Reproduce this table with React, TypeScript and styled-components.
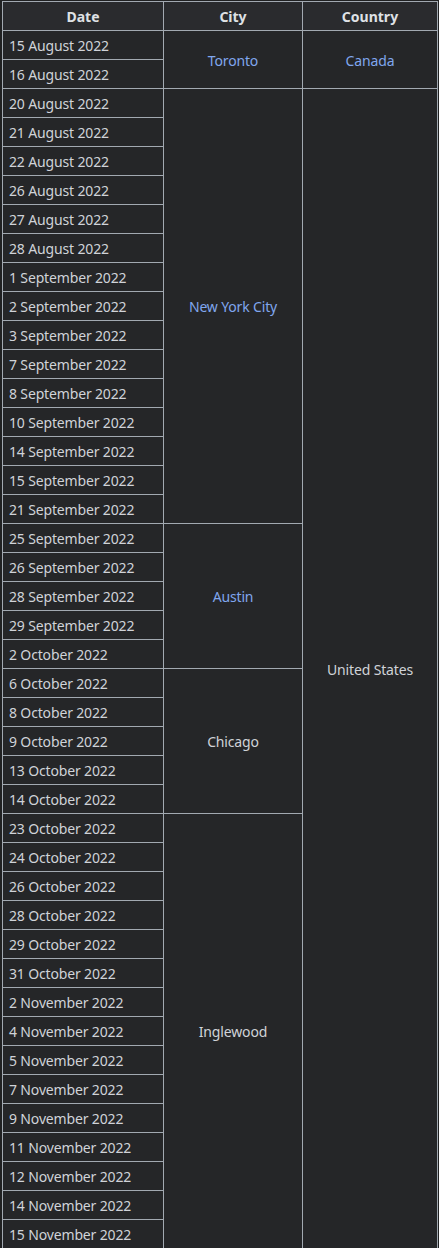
import styled, { createGlobalStyle } from "styled-components";

type Stop = { city: string; link: boolean; dates: string[] };

const stops: Stop[] = [
  { city: "Toronto", link: true, dates: ["15 August 2022", "16 August 2022"] },
  {
    city: "New York City",
    link: true,
    dates: [
      "20 August 2022",
      "21 August 2022",
      "22 August 2022",
      "26 August 2022",
      "27 August 2022",
      "28 August 2022",
      "1 September 2022",
      "2 September 2022",
      "3 September 2022",
      "7 September 2022",
      "8 September 2022",
      "10 September 2022",
      "14 September 2022",
      "15 September 2022",
      "21 September 2022",
    ],
  },
  {
    city: "Austin",
    link: true,
    dates: [
      "25 September 2022",
      "26 September 2022",
      "28 September 2022",
      "29 September 2022",
      "2 October 2022",
    ],
  },
  {
    city: "Chicago",
    link: false,
    dates: ["6 October 2022", "8 October 2022", "9 October 2022", "13 October 2022", "14 October 2022"],
  },
  {
    city: "Inglewood",
    link: false,
    dates: [
      "23 October 2022",
      "24 October 2022",
      "26 October 2022",
      "28 October 2022",
      "29 October 2022",
      "31 October 2022",
      "2 November 2022",
      "4 November 2022",
      "5 November 2022",
      "7 November 2022",
      "9 November 2022",
      "11 November 2022",
      "12 November 2022",
      "14 November 2022",
      "15 November 2022",
    ],
  },
];

// country cells span every stop that belongs to them
const countries = [
  { name: "Canada", link: true, from: 0, to: 0 },
  { name: "United States", link: false, from: 1, to: 4 },
];

export default function App() {
  return (
    <>
      <GlobalStyle />
      <Table>
        <colgroup>
          <col style={{ width: 161 }} />
          <col style={{ width: 139 }} />
          <col style={{ width: 135 }} />
        </colgroup>
        <thead>
          <tr>
            <Th>Date</Th>
            <Th>City</Th>
            <Th>Country</Th>
          </tr>
        </thead>
        <tbody>
          {stops.map((stop, si) =>
            stop.dates.map((date, di) => {
              const country = countries.find((c) => c.from === si);
              const countrySpan = country
                ? stops.slice(country.from, country.to + 1).reduce((n, s) => n + s.dates.length, 0)
                : 0;
              return (
                <tr key={date}>
                  <Td>{date}</Td>
                  {di === 0 && (
                    <Td rowSpan={stop.dates.length} $center>
                      {stop.link ? <Link href="#">{stop.city}</Link> : stop.city}
                    </Td>
                  )}
                  {di === 0 && country && (
                    <Td rowSpan={countrySpan} $center>
                      {country.link ? <Link href="#">{country.name}</Link> : country.name}
                    </Td>
                  )}
                </tr>
              );
            })
          )}
        </tbody>
      </Table>
    </>
  );
}

const GlobalStyle = createGlobalStyle`
  body {
    margin: 0;
    padding: 1px 0 0 2px;
    background: #202122;
    font-family: "Noto Sans", "Noto Sans CJK KR", sans-serif;
    font-size: 14px;
    color: #d0d3d8;
  }
`;

const Table = styled.table`
  border-collapse: collapse;
  table-layout: fixed;
  width: 435px;
  background: #252628;
  line-height: 22px;
`;

const Th = styled.th`
  border: 1px solid #a2a9b1;
  background: #2a2b2e;
  color: #dfe1e5;
  font-weight: bold;
  text-align: center;
  padding: 4px 6px 2px;
`;

const Td = styled.td<{ $center?: boolean }>`
  border: 1px solid #a2a9b1;
  padding: 4px 6px 2px;
  text-align: ${(p) => (p.$center ? "center" : "left")};
  white-space: nowrap;
  letter-spacing: -0.15px;
`;

const Link = styled.a`
  color: #80a6ee;
  text-decoration: none;
`;
